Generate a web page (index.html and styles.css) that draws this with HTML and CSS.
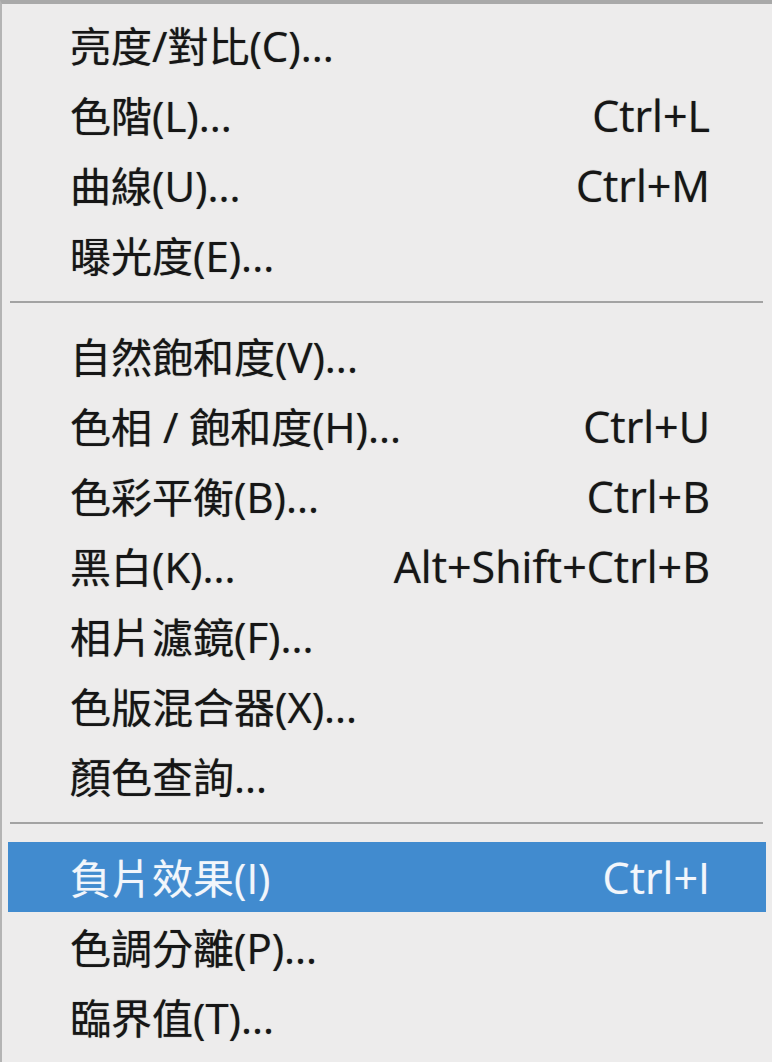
FILE: index.html
```html
<!DOCTYPE html>
<html lang="zh-Hant">
<head>
<meta charset="utf-8">
<link rel="stylesheet" href="styles.css">
</head>
<body>
<div class="menu">
  <div class="item"><span class="label">亮度<span class="lt">/</span>對比<span class="lt">(C)...</span></span></div>
  <div class="item"><span class="label">色階<span class="lt">(L)...</span></span><span class="key">Ctrl+L</span></div>
  <div class="item"><span class="label">曲線<span class="lt">(U)...</span></span><span class="key">Ctrl+M</span></div>
  <div class="item"><span class="label">曝光度<span class="lt">(E)...</span></span></div>
  <div class="sep"></div>
  <div class="item"><span class="label">自然飽和度<span class="lt">(V)...</span></span></div>
  <div class="item"><span class="label">色相<span class="lt"> / </span>飽和度<span class="lt">(H)...</span></span><span class="key">Ctrl+U</span></div>
  <div class="item"><span class="label">色彩平衡<span class="lt">(B)...</span></span><span class="key">Ctrl+B</span></div>
  <div class="item"><span class="label">黑白<span class="lt">(K)...</span></span><span class="key">Alt+Shift+Ctrl+B</span></div>
  <div class="item"><span class="label">相片濾鏡<span class="lt">(F)...</span></span></div>
  <div class="item"><span class="label">色版混合器<span class="lt">(X)...</span></span></div>
  <div class="item"><span class="label">顏色查詢<span class="lt">...</span></span></div>
  <div class="sep"></div>
  <div class="item active"><span class="label">負片效果<span class="lt">(I)</span></span><span class="key">Ctrl+I</span></div>
  <div class="item"><span class="label">色調分離<span class="lt">(P)...</span></span></div>
  <div class="item"><span class="label">臨界值<span class="lt">(T)...</span></span></div>
</div>
</body>
</html>
```
FILE: styles.css
```css
html, body {
  margin: 0;
  padding: 0;
  background: #edecec;
}
.menu {
  width: 772px;
  height: 1062px;
  box-sizing: border-box;
  border-top: 4px solid #a9a9a9;
  border-left: 2px solid #b4b4b4;
  padding: 6px 6px 0 6px;
  background: #edecec;
  color: #161616;
  overflow: hidden;
}
.item {
  height: 70px;
  display: flex;
  align-items: center;
  justify-content: space-between;
  padding: 0 56px 0 62px;
  white-space: nowrap;
  text-shadow: 0 0 1px rgba(0, 0, 0, 0.55);
}
.label {
  font-family: "Noto Sans CJK TC", sans-serif;
  font-size: 41px;
  font-weight: 400;
  line-height: 1;
}
.lt {
  font-family: "Open Sans", "Noto Sans CJK TC", sans-serif;
  font-size: 42px;
  font-weight: 500;
  white-space: pre;
}
.key {
  font-family: "Open Sans", sans-serif;
  font-size: 43px;
  font-weight: 500;
  line-height: 1;
}
.item.active {
  background: #418bcf;
  color: #f2f6fb;
  text-shadow: 0 0 1px rgba(255, 255, 255, 0.4);
}
.item.active .lt,
.item.active .key {
  font-weight: 400;
}
.sep {
  height: 31px;
  display: flex;
  flex-direction: column;
  padding: 11px 3px 0 2px;
  box-sizing: border-box;
}
.sep::before {
  content: "";
  display: block;
  height: 2px;
  background: #a3a3a3;
}
```
